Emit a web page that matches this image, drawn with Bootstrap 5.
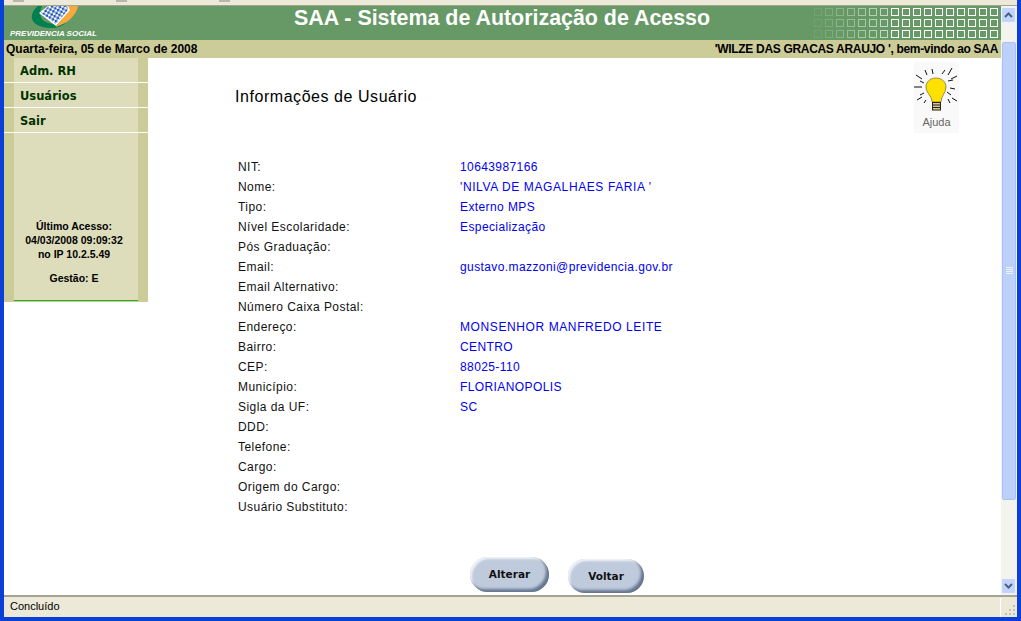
<!DOCTYPE html>
<html lang="pt-BR">
<head>
  <meta charset="UTF-8">
  <title>SAA - Sistema de Autorização de Acesso</title>
  <link href="https://cdn.jsdelivr.net/npm/bootstrap@5.3.0/dist/css/bootstrap.min.css" rel="stylesheet">
  <style>
  html, body { height: 621px; overflow: hidden; }
  body {
    background-color: #0a3fd8;
    font-family: "Liberation Sans", Arial, sans-serif;
    color: #000;
  }
  .frame-win { width: 1021px; height: 621px; padding: 0 4px 4px; }
  .top-strip { height: 6px; background: #ece9d8; border-bottom: 1px solid #a5a392; gap: 92px; padding-left: 9px; }
  .top-tab { width: 11px; height: 2px; background: #b9b7aa; }
  .page-area { height: 589px; }
  .page-col { width: 997px; background: #fff; }
  .head-green { height: 34px; background: #669966; position: relative; overflow: hidden; flex: none; }
  .logo-box { width: 100px; height: 34px; position: relative; }
  .logo-txt {
    position: absolute; left: 6px; top: 22px;
    font-size: 8px; font-weight: bold; font-style: italic; color: #fff; white-space: nowrap;
  }
  .logo-svg { position: absolute; left: 26px; top: 0; }
  .app-title {
    flex: 1; padding-left: 190px; color: #fff; font-size: 21.4px; font-weight: bold; line-height: 24px; white-space: nowrap;
  }
  .dots-svg { position: absolute; left: 806px; top: 0; }
  .date-bar {
    height: 18px; background: #cccc99; font-size: 12px; font-weight: bold; line-height: 19px; padding: 0 3px 0 2px; color: #000; flex: none;
  }
  .greet-txt { letter-spacing: -.32px; }
  .body-row { height: 537px; }
  .side-col { width: 144px; height: 244px; background: #cccc99; padding: 0 10px; flex: none; }
  .side-in { background: #dddcbb; height: 243px; border-bottom: 1px solid #22b022; position: relative; }
  .side-link {
    display: block; height: 25px; margin: 0 -10px; padding-left: 16px; line-height: 26px; font-family: "DejaVu Sans", sans-serif;
    font-size: 11.5px; font-weight: bold; color: #003300; text-decoration: none; border-bottom: 1px solid #fff;
  }
  .side-info { position: absolute; left: 0; right: 4px; top: 161px; text-align: center; font-size: 10.5px; font-weight: bold; line-height: 14px; }
  .gestao-line { margin-top: 10px; }
  .main-col { flex: 1; padding-left: 87px; position: relative; }
  .page-head { font-size: 16px; font-weight: normal; margin: 0; padding-top: 30px; line-height: 18px; letter-spacing: .55px; }
  .help-box {
    position: absolute; right: 42px; top: 4px; width: 45px; height: 71px; background: #f9f9f9; text-align: center;
    font-size: 11px; color: #666; line-height: 13px;
  }
  .help-box svg { display: block; }
  .fields-box { margin-top: 51px; padding-left: 3px; font-size: 12px; }
  .field-row { display: flex; height: 20px; line-height: 20px; }
  .field-lbl { width: 222px; color: #111; letter-spacing: .45px; }
  .field-val { color: #0000ee; letter-spacing: .4px; }
  .field-caps { letter-spacing: .6px; }
  .btn-row { margin-top: 40px; margin-left: 235px; gap: 19px; }
  .pill-btn {
    border: 0; padding: 0; border-radius: 18px; background: #bfcbdd; font-size: 10.5px; font-weight: bold; color: #111;
    font-family: "DejaVu Sans", sans-serif;
    box-shadow: inset -3px -3px 3px #66768f, inset 2px 2px 2px #eef2f7;
  }
  .alterar-btn { width: 79px; height: 35px; }
  .voltar-btn { width: 76px; height: 34px; margin-top: 2px; padding-top: 2px; }
  .scroll-col { width: 16px; background: #f4f3ee; position: relative; flex: none; }
  .scroll-btn {
    position: absolute; left: 0; width: 15px; height: 16px; background: #c3d4fb; border: 1px solid #eef3ff; border-radius: 2px;
    display: flex; align-items: center; justify-content: center;
  }
  .scroll-up { top: 1px; }
  .scroll-down { bottom: 1px; }
  .scroll-thumb {
    position: absolute; top: 36px; left: 1px; width: 14px; height: 458px; background: #bdd0fa; border: 1px solid #eef3ff; outline: 1px solid #a9c1f4; outline-offset: -1px; border-radius: 2px;
    display: flex; align-items: center; justify-content: center;
  }
  .status-bar { height: 22px; background: #ece9d8; border-top: 2px solid #a5a392; font-size: 11px; line-height: 19px; padding-left: 6px; position: relative; }
  .status-sep { position: absolute; right: 16px; top: 1px; bottom: 0; width: 1px; background: #fff; }
  .grip-svg { position: absolute; right: 1px; bottom: 1px; }
  </style>
</head>
<body>
  <div class="frame-win d-flex flex-column">
    <div class="top-strip d-flex">
      <span class="top-tab"></span><span class="top-tab"></span><span class="top-tab"></span>
    </div>
    <div class="page-area d-flex">
      <div class="page-col d-flex flex-column">
        <div class="head-green d-flex">
          <div class="logo-box">
            <svg class="logo-svg" width="50" height="23" viewBox="0 0 50 23">
              <defs>
                <pattern id="chk" width="5" height="5" patternUnits="userSpaceOnUse" patternTransform="rotate(-15)">
                  <rect width="2.5" height="2.5" fill="#1f55b5"/>
                  <rect x="2.5" y="2.5" width="2.5" height="2.5" fill="#1f55b5"/>
                </pattern>
              </defs>
              <path d="M8 0C3 4 1 9 2 13C4 19 12 22 22 22C27 22 32 20 36 17C30 19 20 19 14 15C10 12 9 6 12 0Z" fill="#00804f"/>
              <path d="M37 0H48C47 8 38 18 25 21C32 15 37 8 37 0Z" fill="#f7a93c"/>
              <path d="M9 7L18 0H38L40 4L26 20Z" fill="#fff"/>
              <path d="M11 7L19 0H37L38 4L26 18Z" fill="url(#chk)"/>
            </svg>
            <span class="logo-txt">PREVIDENCIA SOCIAL</span>
          </div>
          <div class="app-title">SAA - Sistema de Autorização de Acesso</div>
          <svg class="dots-svg" id="dots" width="195" height="34"></svg>
        </div>
        <div class="date-bar d-flex justify-content-between">
          <span>Quarta-feira, 05 de Marco de 2008</span>
          <span class="greet-txt">'WILZE DAS GRACAS ARAUJO ', bem-vindo ao SAA</span>
        </div>
        <div class="body-row d-flex">
          <div class="side-col">
            <div class="side-in">
              <a class="side-link" href="#">Adm. RH</a>
              <a class="side-link" href="#">Usuários</a>
              <a class="side-link" href="#">Sair</a>
              <div class="side-info">
                Último Acesso:<br>04/03/2008 09:09:32<br>no IP 10.2.5.49
                <div class="gestao-line">Gestão: E</div>
              </div>
            </div>
          </div>
          <div class="main-col">
            <h1 class="page-head">Informações de Usuário</h1>
            <div class="help-box">
              <svg width="45" height="54" viewBox="0 0 45 54">
                <path d="M22 16C16 16 12 20 12 25C12 31 18 34 18 40H27C27 34 32 31 32 25C32 20 28 16 22 16Z" fill="#ffe100" stroke="#333" stroke-width=".5"/>
                <rect x="18.5" y="40.5" width="8" height="7.5" fill="#d8c98a" stroke="#222"/>
                <path d="M18 43H27M18 45.5H27" stroke="#222"/>
                <path d="M2 13L8 17M11 8L13 13M18 7L19 12M31 8L28 12M38 6L34 13M43 14L37 17M39 18L34 19M0 25H8M6 19L10 21M41 27L36 26M6 33L10 31M3 38L8 35M12 38L10 41M33 30L37 33M38 36L43 39M34 37L36 41" stroke="#111" stroke-width="1" fill="none"/>
              </svg>
              <div>Ajuda</div>
            </div>
            <div class="fields-box">
              <div class="field-row"><span class="field-lbl">NIT:</span><span class="field-val">10643987166</span></div>
              <div class="field-row"><span class="field-lbl">Nome:</span><span class="field-val field-caps">'NILVA DE MAGALHAES FARIA '</span></div>
              <div class="field-row"><span class="field-lbl">Tipo:</span><span class="field-val">Externo MPS</span></div>
              <div class="field-row"><span class="field-lbl">Nível Escolaridade:</span><span class="field-val">Especialização</span></div>
              <div class="field-row"><span class="field-lbl">Pós Graduação:</span><span class="field-val"></span></div>
              <div class="field-row"><span class="field-lbl">Email:</span><span class="field-val">gustavo.mazzoni@previdencia.gov.br</span></div>
              <div class="field-row"><span class="field-lbl">Email Alternativo:</span><span class="field-val"></span></div>
              <div class="field-row"><span class="field-lbl">Número Caixa Postal:</span><span class="field-val"></span></div>
              <div class="field-row"><span class="field-lbl">Endereço:</span><span class="field-val field-caps">MONSENHOR MANFREDO LEITE</span></div>
              <div class="field-row"><span class="field-lbl">Bairro:</span><span class="field-val">CENTRO</span></div>
              <div class="field-row"><span class="field-lbl">CEP:</span><span class="field-val">88025-110</span></div>
              <div class="field-row"><span class="field-lbl">Município:</span><span class="field-val">FLORIANOPOLIS</span></div>
              <div class="field-row"><span class="field-lbl">Sigla da UF:</span><span class="field-val">SC</span></div>
              <div class="field-row"><span class="field-lbl">DDD:</span><span class="field-val"></span></div>
              <div class="field-row"><span class="field-lbl">Telefone:</span><span class="field-val"></span></div>
              <div class="field-row"><span class="field-lbl">Cargo:</span><span class="field-val"></span></div>
              <div class="field-row"><span class="field-lbl">Origem do Cargo:</span><span class="field-val"></span></div>
              <div class="field-row"><span class="field-lbl">Usuário Substituto:</span><span class="field-val"></span></div>
            </div>
            <div class="btn-row d-flex align-items-start">
              <button class="pill-btn alterar-btn" type="button">Alterar</button>
              <button class="pill-btn voltar-btn" type="button">Voltar</button>
            </div>
          </div>
        </div>
      </div>
      <div class="scroll-col">
        <div class="scroll-btn scroll-up">
          <svg width="9" height="6" viewBox="0 0 9 6"><path d="M1 5L4.5 1.5L8 5" fill="none" stroke="#4d6185" stroke-width="2"/></svg>
        </div>
        <div class="scroll-thumb">
          <svg width="7" height="8" viewBox="0 0 7 8"><path d="M0 .5H7M0 2.5H7M0 4.5H7M0 6.5H7" stroke="#eef3ff"/></svg>
        </div>
        <div class="scroll-btn scroll-down">
          <svg width="9" height="6" viewBox="0 0 9 6"><path d="M1 1L4.5 4.5L8 1" fill="none" stroke="#4d6185" stroke-width="2"/></svg>
        </div>
      </div>
    </div>
    <div class="status-bar">Concluído<span class="status-sep"></span>
      <svg class="grip-svg" width="12" height="12" viewBox="0 0 12 12">
        <path d="M9 1h2v2H9zM5 5h2v2H5zM9 5h2v2H9zM1 9h2v2H1zM5 9h2v2H5zM9 9h2v2H9z" fill="#c5c2b2"/>
      </svg>
    </div>
  </div>
  <script>
    // header squares, fading out to the left
    const dots = document.getElementById("dots");
    let html = "";
    for (let r = 0; r < 3; r++) {
      for (let c = 0; c < 17; c++) {
        const op = c >= 7 ? 1 : 0.08 + c * 0.09;
        html += `<rect x="${4.5 + c * 11}" y="${2.5 + r * 11}" width="7" height="7" fill="none" stroke="#fff" opacity="${op}"/>`;
      }
    }
    dots.innerHTML = html;
  </script>
</body>
</html>
